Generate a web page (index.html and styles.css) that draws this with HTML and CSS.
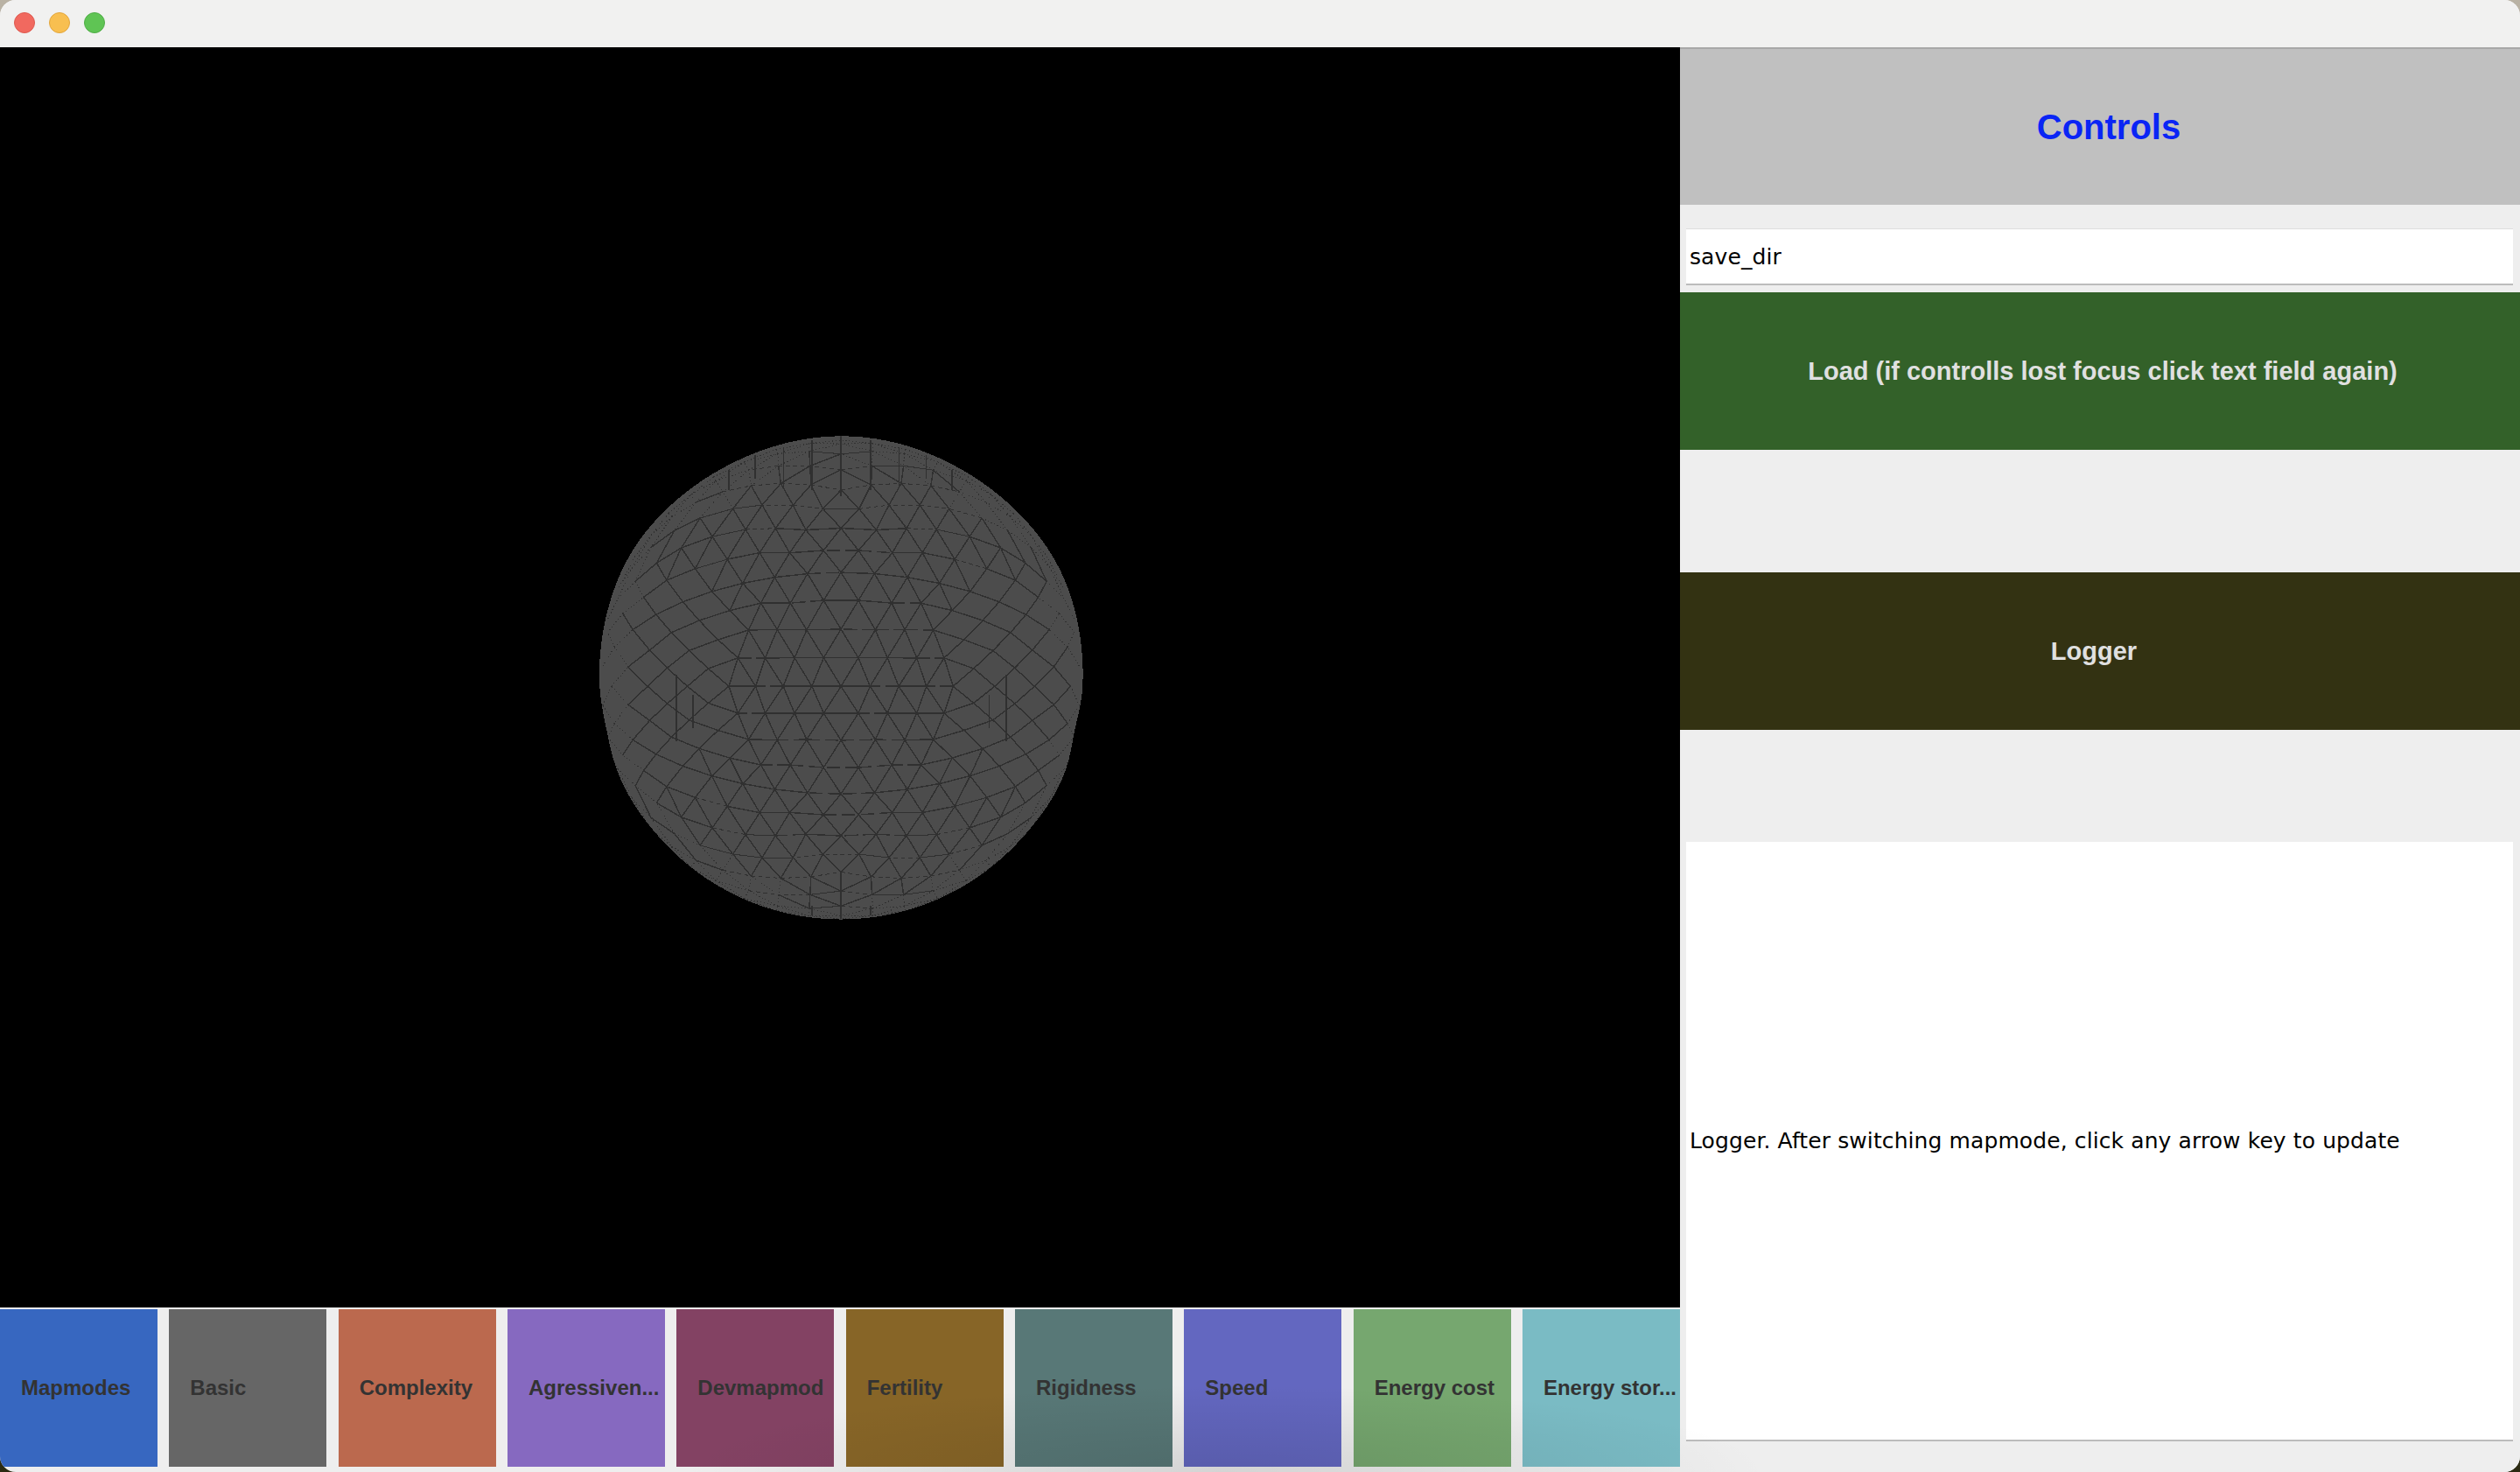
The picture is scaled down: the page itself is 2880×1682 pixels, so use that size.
FILE: index.html
```html
<!DOCTYPE html>
<html lang="en">
<head>
<meta charset="utf-8">
<title>Mapmodes</title>
<link rel="stylesheet" href="styles.css">
</head>
<body>
<div class="window">
  <header class="titlebar">
    <span class="light light-red"></span>
    <span class="light light-yellow"></span>
    <span class="light light-green"></span>
  </header>
  <main class="content">
    <section class="left">
      <div class="stage">
        <svg class="sphere" viewBox="0 0 1568 1568" aria-label="Sphere mesh">
          <defs>
            <clipPath id="outline-clip"><polygon id="outline-clip-shape" points="0,0"/></clipPath>
          </defs>
          <polygon id="outline" class="sphere-fill" points="0,0"/>
          <g id="mesh" class="mesh" clip-path="url(#outline-clip)">
            <path d="M295 760V960M345 820V920M1280 760V960M1230 820V920"/>
            <path d="M700 60V210M787 48V228M875 60V210M615 80V205M960 80V205M530 105V175M1042 105V175M452 150V210M1118 150V210M700 1450V1480M787 1430V1490M875 1450V1480"/>
          </g>
        </svg>
      </div>
      <nav class="modes">
        <button class="mode mode-blue">Mapmodes</button>
        <button class="mode mode-grey">Basic</button>
        <button class="mode mode-orange">Complexity</button>
        <button class="mode mode-purple">Agressiven...</button>
        <button class="mode mode-maroon">Devmapmod</button>
        <button class="mode mode-brown">Fertility</button>
        <button class="mode mode-teal">Rigidness</button>
        <button class="mode mode-indigo">Speed</button>
        <button class="mode mode-green">Energy cost</button>
        <button class="mode mode-sky">Energy stor...</button>
      </nav>
    </section>
    <aside class="right">
      <div class="bar bar-controls"><span class="shift-controls">Controls</span></div>
      <div class="field">save_dir</div>
      <button class="bar bar-load"><span class="shift-load">Load (if controlls lost focus click text field again)</span></button>
      <button class="bar bar-logger"><span class="shift-logger">Logger</span></button>
      <div class="log">Logger. After switching mapmode, click any arrow key to update</div>
    </aside>
  </main>
  <div class="bottom-shade"></div>
</div>
<script src="mesh.js"></script>
</body>
</html>
```
FILE: styles.css
```css
* { box-sizing: border-box; }
html, body {
  margin: 0;
  height: 100%;
  overflow: hidden;
  background: linear-gradient(#b9b2a4, #b9b2a4 50%, #2b2a12 50%);
}
.window {
  position: relative;
  width: 2880px;
  height: 1682px;
  display: flex;
  flex-direction: column;
  background: #eeeeee;
  border-radius: 18px;
  overflow: hidden;
  font-family: "Liberation Sans", Arial, sans-serif;
}
.titlebar {
  height: 54px;
  flex: none;
  display: flex;
  align-items: center;
  gap: 16px;
  padding: 0 0 2px 16px;
  background: #f1f1f0;
}
.light { width: 24px; height: 24px; border-radius: 50%; border: 1px solid; }
.light-red { background: #f1695f; border-color: #dd5a50; }
.light-yellow { background: #f8bf50; border-color: #e2a53c; }
.light-green { background: #5fc454; border-color: #50ad47; }
.content { flex: 1; display: flex; min-height: 0; }
.left { width: 1920px; flex: none; display: flex; flex-direction: column; }
.stage {
  height: 1440px;
  flex: none;
  background: #000;
  display: flex;
  align-items: center;
  justify-content: center;
  padding-top: 12px;
}
.sphere { width: 600px; height: 600px; display: block; }
.sphere-fill { fill: #4c4c4c; shape-rendering: crispEdges; }
.mesh path { stroke: #303030; stroke-width: 3.8; fill: none; shape-rendering: crispEdges; }
.mesh path.thin { stroke-width: 2.7; }
.modes { display: flex; gap: 13.33px; margin-top: 2px; height: 180px; }
.mode {
  flex: 1 1 0;
  min-width: 0;
  padding: 0 0 0 24px;
  border: 0;
  text-align: left;
  white-space: nowrap;
  overflow: hidden;
  font: bold 24px "Liberation Sans", Arial, sans-serif;
  color: #333333;
}
.mode-blue { background: #3767c0; }
.mode-grey { background: #666666; }
.mode-orange { background: #bb694e; }
.mode-purple { background: #8669c0; }
.mode-maroon { background: #834263; }
.mode-brown { background: #876527; }
.mode-teal { background: #587877; }
.mode-indigo { background: #6367c0; }
.mode-green { background: #76a76f; }
.mode-sky { background: #7abbc4; }
.bottom-shade {
  position: absolute;
  left: 0;
  right: 0;
  bottom: 0;
  height: 120px;
  pointer-events: none;
  background: radial-gradient(ellipse 620px 100px at 1400px 100%, rgba(0, 0, 0, 0.11), rgba(0, 0, 0, 0) 100%);
}
.right { flex: 1; display: flex; flex-direction: column; min-width: 0; background: #eeeeee; }
.bar {
  height: 180px;
  flex: none;
  width: 100%;
  border: 0;
  display: flex;
  align-items: center;
  justify-content: center;
  font: bold 29px "Liberation Sans", Arial, sans-serif;
  color: #e0e0e0;
}
.bar-controls { background: #c0c0c0; border-top: 2px solid #a8a8a8; color: #0a25f5; font-size: 40px; }
.shift-controls { margin-left: 20px; }
.shift-load { margin-left: 6px; }
.shift-logger { margin-right: 14px; }
.field {
  height: 65px;
  flex: none;
  margin: 27px 8px 8px 7px;
  padding-left: 4px;
  display: flex;
  align-items: center;
  background: #fff;
  border-top: 1px solid #dddddd;
  border-bottom: 2px solid #bcbcbc;
  font: 25px "DejaVu Sans", sans-serif;
  letter-spacing: 0.1px;
  color: #000;
}
.bar-load { background: #336129; }
.bar-logger { background: #333212; margin-top: 140px; }
.log {
  height: 685px;
  flex: none;
  margin: 128px 8px 0 7px;
  padding-left: 4px;
  display: flex;
  align-items: center;
  background: #fff;
  border-bottom: 2px solid #bcbcbc;
  font: 25px "DejaVu Sans", sans-serif;
  letter-spacing: 0.1px;
  color: #000;
}
```
FILE: mesh.js
```js
(function () {
  // Silhouette: a circle with the slight bumps of the deformed planet.
  var bumps = [[26, 7, 16], [150, 7, 16], [62, -4, 18], [115, -4, 18], [-12.5, -7, 6], [192, -5, 7], [-27, 5, 9], [207, 3, 10]];
  var pts = [];
  for (var d = 0; d < 360; d += 2) {
    var r = 722;
    bumps.forEach(function (b) {
      [b[0], b[0] + 360, b[0] - 360].forEach(function (c) {
        r += b[1] * Math.exp(-Math.pow((d - c) / b[2], 2));
      });
    });
    var t = d * Math.PI / 180;
    pts.push((787 + r * Math.cos(t)).toFixed(1) + "," + (769 - r * Math.sin(t)).toFixed(1));
  }
  document.getElementById("outline").setAttribute("points", pts.join(" "));
  document.getElementById("outline-clip-shape").setAttribute("points", pts.join(" "));

  // Mesh: an icosahedron subdivided three times, seen along a two-fold axis.
  var phi = (1 + Math.sqrt(5)) / 2, V = [], F = [];
  [-1, 1].forEach(function (a) {
    [-1, 1].forEach(function (b) {
      V.push([a, 0, b * phi], [0, a * phi, b], [a * phi, b, 0]);
    });
  });
  function dist(p, q) {
    return Math.hypot(p[0] - q[0], p[1] - q[1], p[2] - q[2]);
  }
  for (var i = 0; i < 12; i++) for (var j = i + 1; j < 12; j++) for (var k = j + 1; k < 12; k++) {
    if (Math.abs(dist(V[i], V[j]) - 2) < 0.01 && Math.abs(dist(V[j], V[k]) - 2) < 0.01 && Math.abs(dist(V[i], V[k]) - 2) < 0.01) F.push([V[i], V[j], V[k]]);
  }
  function norm(p) {
    var l = Math.hypot(p[0], p[1], p[2]);
    return [p[0] / l, p[1] / l, p[2] / l];
  }
  function mid(p, q) { return norm([p[0] + q[0], p[1] + q[1], p[2] + q[2]]); }
  var tris = F.map(function (f) { return f.map(norm); });
  for (var level = 0; level < 3; level++) {
    var next = [];
    tris.forEach(function (t) {
      var a = mid(t[0], t[1]), b = mid(t[1], t[2]), c = mid(t[0], t[2]);
      next.push([t[0], a, c], [a, t[1], b], [c, b, t[2]], [a, b, c]);
    });
    tris = next;
  }
  function project(p) {
    var r = Math.hypot(p[0], p[1]);
    var s = 0.87 + 0.13 * r * r * r * r;
    return [787 + 724 * s * p[0], 795 - (p[1] > 0 ? 735 : 695) * s * p[1]];
  }
  var seen = {}, dots = "", dashes = "", solid = "", broken = "", thin = "";
  function key(p) { return p.map(function (v) { return v.toFixed(4); }).join(","); }
  tris.forEach(function (t) {
    [[0, 1], [1, 2], [2, 0]].forEach(function (e) {
      var p = t[e[0]], q = t[e[1]];
      var kp = key(p), kq = key(q), id = kp < kq ? kp + "|" + kq : kq + "|" + kp;
      if (seen[id]) return;
      seen[id] = 1;
      if (p[2] < 0 || q[2] < 0) return;
      var a = project(p), b = project(q), z = Math.min(p[2], q[2]);
      var seg = "M" + a[0].toFixed(1) + " " + a[1].toFixed(1) + "L" + b[0].toFixed(1) + " " + b[1].toFixed(1);
      var hash = Math.abs(Math.sin(a[0] * 12.9898 + b[1] * 78.233) * 43758.5453) % 1;
      var dx = Math.abs(a[0] - b[0]), dy = Math.abs(a[1] - b[1]);
      var flat = dy < 0.3 * dx;
      var side = Math.abs(p[0]) > 0.5 && Math.abs(q[0]) > 0.5;
      // At the sides the reference shows diamonds, not stacked triangles.
      if (side && dx < 0.45 * dy) return;
      if (z < 0.2) dots += seg;
      else if (z < 0.62) {
        // Away from the centre the rows break up while the diagonals stay solid.
        if (flat) { if (hash < 0.7) dashes += seg; else thin += seg; }
        else if (z < 0.34 && hash < 0.5) dots += seg;
        else solid += seg;
      }
      else if (flat && hash < 0.45) broken += seg;
      else solid += seg;
    });
  });
  var g = document.getElementById("mesh");
  function add(d, dash, cls) {
    var el = document.createElementNS("http://www.w3.org/2000/svg", "path");
    el.setAttribute("d", d);
    if (dash) el.setAttribute("stroke-dasharray", dash);
    if (cls) el.setAttribute("class", cls);
    g.appendChild(el);
  }
  add(solid);
  add(thin, "", "thin");
  add(broken, "40 14");
  add(dashes, "12 10", "thin");
  add(dots, "3 7", "thin");
})();
```
